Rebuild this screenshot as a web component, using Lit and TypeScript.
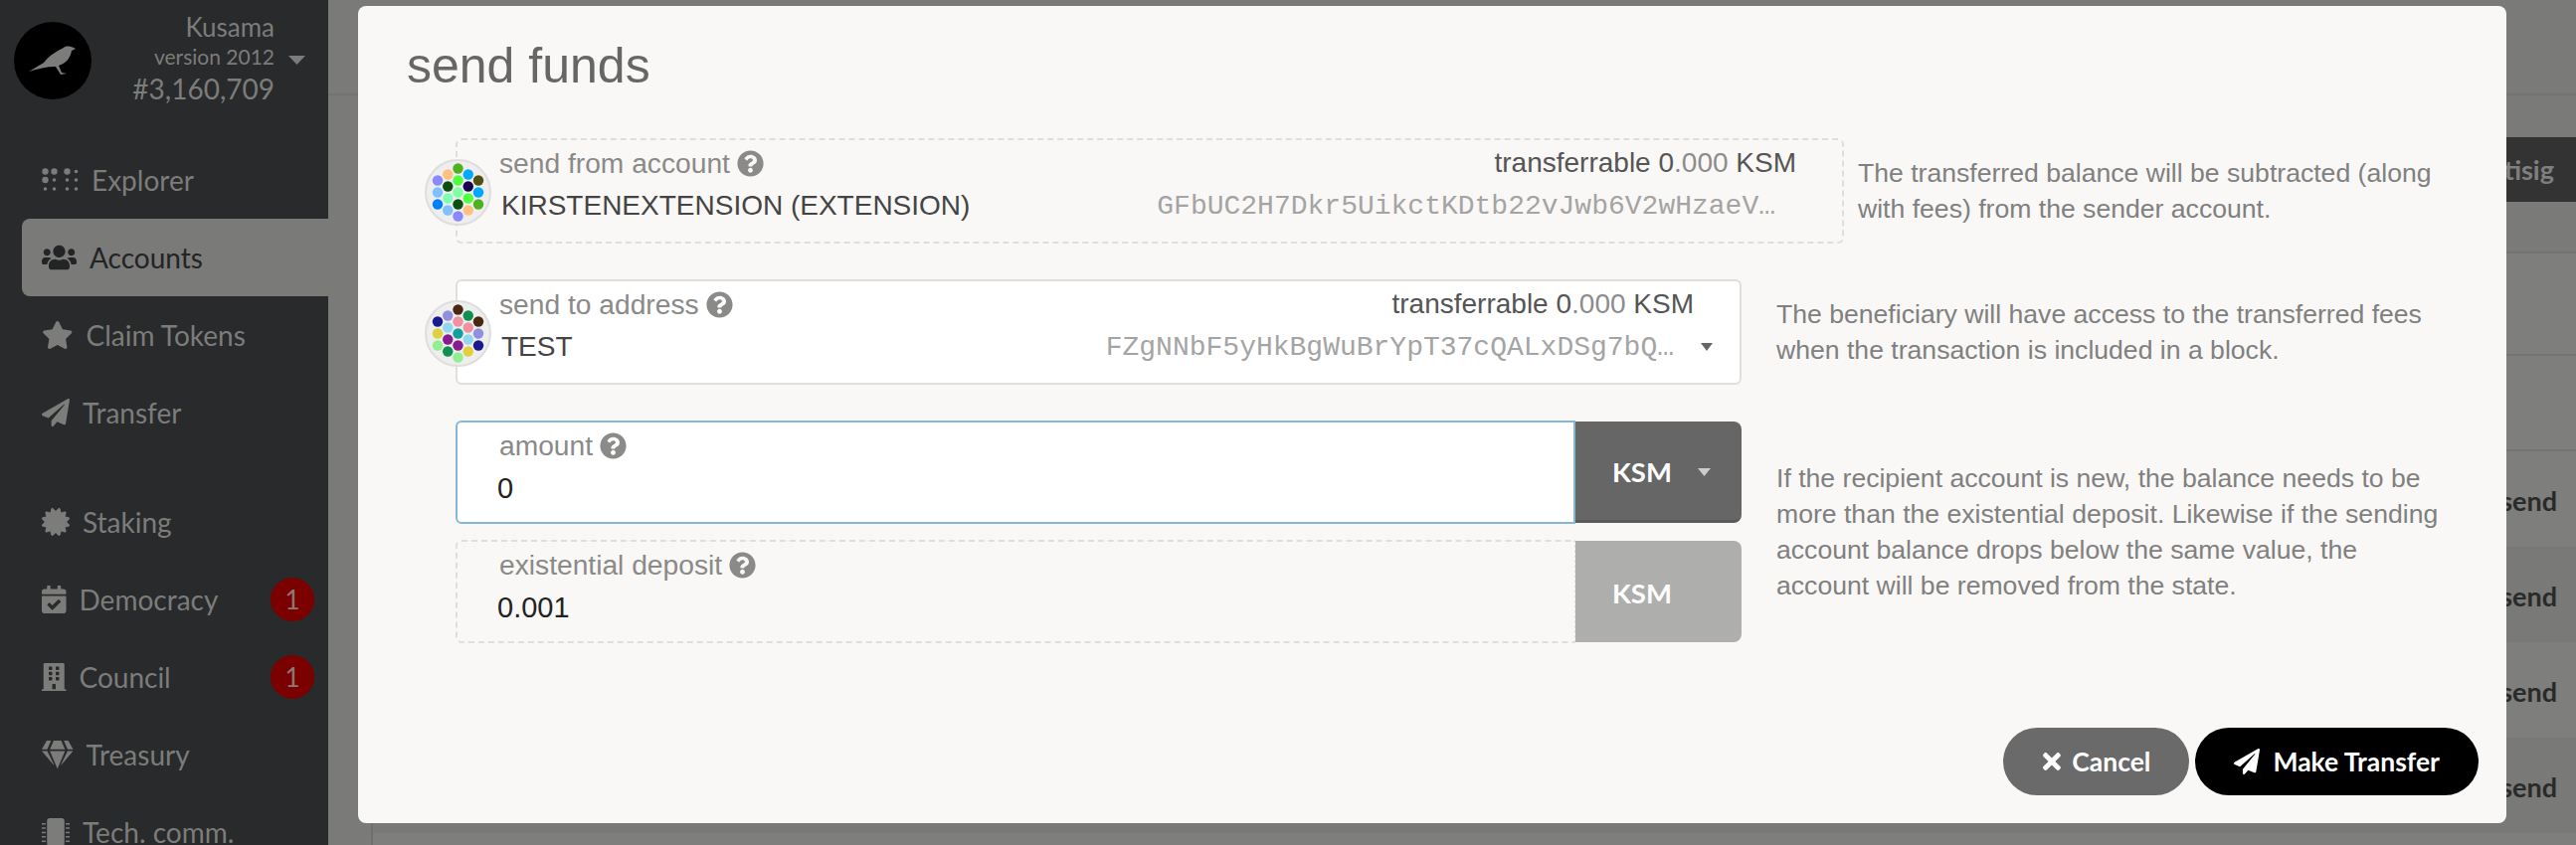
import { LitElement, html, css, svg } from "lit";
import { customElement } from "lit/decorators.js";

const P = {
  plane: [512, "M476 3.2L12.5 270.6c-18.1 10.4-15.8 35.6 2.2 43.2L121 358.4l287.3-253.2c5.5-4.9 13.3 2.6 8.6 8.3L176 407v80.5c0 23.6 28.5 32.9 42.5 15.8L282 426l124.6 52.2c14.2 6 30.4-2.9 33-18.2l72-432C515 7.8 493.3-6.8 476 3.2z"],
  star: [576, "M259.3 17.8L194 150.2 47.9 171.5c-26.2 3.8-36.7 36.1-17.7 54.6l105.7 103-25 145.5c-4.5 26.3 23.2 46 46.4 33.7L288 439.6l130.7 68.7c23.2 12.2 50.9-7.4 46.4-33.7l-25-145.5 105.7-103c19-18.5 8.5-50.8-17.7-54.6L382 150.2 316.7 17.8c-11.7-23.6-45.6-23.9-57.4 0z"],
  users: [640, "M96 224c35.3 0 64-28.7 64-64s-28.7-64-64-64-64 28.7-64 64 28.7 64 64 64zm448 0c35.3 0 64-28.7 64-64s-28.7-64-64-64-64 28.7-64 64 28.7 64 64 64zm32 32h-64c-17.6 0-33.5 7.1-45.1 18.6 40.3 22.1 68.9 62 75.1 109.4h66c17.7 0 32-14.3 32-32v-32c0-35.3-28.7-64-64-64zm-256 0c61.9 0 112-50.1 112-112S381.9 32 320 32 208 82.1 208 144s50.1 112 112 112zm76.8 32h-8.3c-20.8 10-43.9 16-68.5 16s-47.6-6-68.5-16h-8.3C179.6 288 128 339.6 128 403.2V432c0 26.5 21.5 48 48 48h288c26.5 0 48-21.5 48-48v-28.8c0-63.6-51.6-115.2-115.2-115.2zm-223.7-13.4C161.5 263.1 145.6 256 128 256H64c-35.3 0-64 28.7-64 64v32c0 17.7 14.3 32 32 32h65.9c6.3-47.4 34.9-87.3 75.2-109.4z"],
  question: [512, "M504 256c0 136.997-111.043 248-248 248S8 392.997 8 256C8 119.083 119.043 8 256 8s248 111.083 248 248zM262.655 90c-54.497 0-89.255 22.957-116.549 63.758-3.536 5.286-2.353 12.415 2.715 16.258l34.699 26.31c5.205 3.947 12.621 3.008 16.665-2.122 17.864-22.658 30.113-35.797 57.303-35.797 20.429 0 45.698 13.148 45.698 32.958 0 14.976-12.363 22.667-32.534 33.976C247.128 238.528 216 254.941 216 296v4c0 6.627 5.373 12 12 12h56c6.627 0 12-5.373 12-12v-1.333c0-28.462 83.186-29.647 83.186-106.667 0-58.002-60.165-102-116.531-102zM256 338c-25.365 0-46 20.635-46 46 0 25.364 20.635 46 46 46s46-20.636 46-46c0-25.365-20.635-46-46-46z"],
  times: [352, "M242.72 256l100.07-100.07c12.28-12.28 12.28-32.19 0-44.48l-22.24-22.24c-12.28-12.28-32.19-12.28-44.48 0L176 189.28 75.93 89.21c-12.28-12.28-32.19-12.28-44.48 0L9.21 111.45c-12.28 12.28-12.28 32.19 0 44.48L109.28 256 9.21 356.07c-12.28 12.28-12.28 32.19 0 44.48l22.24 22.24c12.28 12.28 32.2 12.28 44.48 0L176 322.72l100.07 100.07c12.28 12.28 32.2 12.28 44.48 0l22.24-22.24c12.28-12.28 12.28-32.19 0-44.48L242.72 256z"],
  cert: [512, "M458.622 255.92l45.985-45.005c13.708-12.977 7.316-36.039-10.664-40.339l-62.65-15.99 17.661-62.015c4.991-17.838-11.829-34.663-29.661-29.671l-61.994 17.667-15.984-62.671C337.085.197 313.765-6.276 300.99 7.228L256 53.57 211.011 7.229c-12.63-13.351-36.047-7.234-40.325 10.668l-15.984 62.671-61.995-17.667C74.87 57.907 58.056 74.738 63.046 92.572l17.661 62.015-62.65 15.99C.069 174.878-6.31 197.944 7.392 210.915l45.985 45.005-45.985 45.004c-13.708 12.977-7.316 36.039 10.664 40.339l62.65 15.99-17.661 62.015c-4.991 17.838 11.829 34.663 29.661 29.671l61.994-17.667 15.984 62.671c4.439 18.575 27.696 24.018 40.325 10.668L256 458.61l44.989 46.001c12.5 13.488 35.987 7.486 40.325-10.668l15.984-62.671 61.994 17.667c17.836 4.994 34.651-11.837 29.661-29.671l-17.661-62.015 62.65-15.99c17.987-4.302 24.366-27.367 10.664-40.339l-45.984-45.004z"],
  calendar: [448, "M436 160H12c-6.627 0-12-5.373-12-12v-36c0-26.51 21.49-48 48-48h48V12c0-6.627 5.373-12 12-12h40c6.627 0 12 5.373 12 12v52h128V12c0-6.627 5.373-12 12-12h40c6.627 0 12 5.373 12 12v52h48c26.51 0 48 21.49 48 48v36c0 6.627-5.373 12-12 12zM12 192h424c6.627 0 12 5.373 12 12v260c0 26.51-21.49 48-48 48H48c-26.51 0-48-21.49-48-48V204c0-6.627 5.373-12 12-12zm333.296 95.947l-28.169-28.398c-4.667-4.705-12.265-4.736-16.97-.068L194.12 364.665l-45.98-46.352c-4.667-4.705-12.266-4.736-16.971-.068l-28.397 28.17c-4.705 4.667-4.736 12.265-.068 16.97l82.601 83.269c4.667 4.705 12.265 4.736 16.97.068l142.953-141.805c4.705-4.667 4.736-12.265.068-16.97z"],
  building: [448, "M436 480h-20V24c0-13.255-10.745-24-24-24H56C42.745 0 32 10.745 32 24v456H12c-6.627 0-12 5.373-12 12v20h448v-20c0-6.627-5.373-12-12-12zM128 76c0-6.627 5.373-12 12-12h40c6.627 0 12 5.373 12 12v40c0 6.627-5.373 12-12 12h-40c-6.627 0-12-5.373-12-12V76zm0 96c0-6.627 5.373-12 12-12h40c6.627 0 12 5.373 12 12v40c0 6.627-5.373 12-12 12h-40c-6.627 0-12-5.373-12-12v-40zm52 148h-40c-6.627 0-12-5.373-12-12v-40c0-6.627 5.373-12 12-12h40c6.627 0 12 5.373 12 12v40c0 6.627-5.373 12-12 12zm76 160h-64v-84c0-6.627 5.373-12 12-12h40c6.627 0 12 5.373 12 12v84zm64-172c0 6.627-5.373 12-12 12h-40c-6.627 0-12-5.373-12-12v-40c0-6.627 5.373-12 12-12h40c6.627 0 12 5.373 12 12v40zm0-96c0 6.627-5.373 12-12 12h-40c-6.627 0-12-5.373-12-12v-40c0-6.627 5.373-12 12-12h40c6.627 0 12 5.373 12 12v40zm0-96c0 6.627-5.373 12-12 12h-40c-6.627 0-12-5.373-12-12V76c0-6.627 5.373-12 12-12h40c6.627 0 12 5.373 12 12v40z"],
  gem: [576, "M485.5 0L576 160H474.9L405.7 0h79.8zm-128 0l69.2 160H149.3L218.5 0h139zm-267 0h79.8l-69.2 160H0L90.5 0zM0 192h100.7l123 251.7c1.5 3.1-2.7 5.9-5 3.3L0 192zm148.2 0h279.6l-137 318.2c-1 2.4-4.5 2.4-5.5 0L148.2 192zm204.1 251.7l123-251.7H576L357.3 446.9c-2.3 2.7-6.5-.1-5-3.2z"],
  chip: [512, "M416 48v416c0 26.51-21.49 48-48 48H144c-26.51 0-48-21.49-48-48V48c0-26.51 21.49-48 48-48h224c26.51 0 48 21.49 48 48zM0 90h72v28H0zm0 80h72v28H0zm0 80h72v28H0zm0 80h72v28H0zm0 80h72v28H0zM440 90h72v28h-72zm0 80h72v28h-72zm0 80h72v28h-72zm0 80h72v28h-72zm0 80h72v28h-72z"],
} as const;

const icon = (name: keyof typeof P, cls = "") => {
  const [w, d] = P[name];
  return html`<svg class="ico ${cls}" viewBox="0 0 ${w} 512" fill="currentColor"><path d="${d}"></path></svg>`;
};

const braille = html`<svg class="ico braille" viewBox="0 0 37 24" fill="currentColor">
  <circle cx="3.5" cy="3.5" r="3.2"></circle><circle cx="12.5" cy="3.5" r="3.2"></circle><circle cx="25.5" cy="3.5" r="3.2"></circle><circle cx="34.5" cy="3.5" r="1.8"></circle>
  <circle cx="3.5" cy="12" r="3.2"></circle><circle cx="12.5" cy="12" r="1.8"></circle><circle cx="25.5" cy="12" r="1.8"></circle><circle cx="34.5" cy="12" r="1.8"></circle>
  <circle cx="3.5" cy="21" r="1.8"></circle><circle cx="12.5" cy="21" r="1.8"></circle><circle cx="25.5" cy="21" r="1.8"></circle><circle cx="34.5" cy="21" r="1.8"></circle>
</svg>`;

const layout: [number, number][] = [
  [-20.5, -12], [-20.5, 0], [-20.5, 12],
  [-10.25, -18], [-10.25, -6], [-10.25, 6], [-10.25, 18],
  [0, -24], [0, -12], [0, 0], [0, 12], [0, 24],
  [10.25, -18], [10.25, -6], [10.25, 6], [10.25, 18],
  [20.5, -12], [20.5, 0], [20.5, 12],
];

const identicon = (colors: string[]) => html`<svg class="identicon" viewBox="-33.5 -33.5 67 67">
  <circle r="32.5" fill="#eeeeee" stroke="#dedede" stroke-width="2"></circle>
  ${layout.map(([x, y], i) => svg`<circle cx=${x} cy=${y} r="5.2" fill=${colors[i]}></circle>`)}
</svg>`;

const A = ["#8888ff", "#80c0ff", "#0080ff", "#ffc080", "#0a5010", "#80ffb0", "#80c0ff", "#50b020", "#50ff40", "#80ffa0", "#0a5010", "#8888ff", "#00a8ff", "#180050", "#50ff40", "#ffc080", "#505010", "#00a8ff", "#50b020"];
const B = ["#1a1a90", "#e0d040", "#90f090", "#9090e0", "#90d8f0", "#8a1a90", "#109050", "#4a2810", "#f090a0", "#10a0a0", "#8a1a90", "#90f090", "#109050", "#f090a0", "#90d8f0", "#e0d040", "#4a2810", "#9090e0", "#1a1a90"];

const NAV: { label: string; icon: any; active?: boolean; badge?: string; sep?: boolean }[] = [
  { label: "Explorer", icon: braille },
  { label: "Accounts", icon: icon("users"), active: true },
  { label: "Claim Tokens", icon: icon("star") },
  { label: "Transfer", icon: icon("plane") },
  { label: "Staking", icon: icon("cert"), sep: true },
  { label: "Democracy", icon: icon("calendar"), badge: "1" },
  { label: "Council", icon: icon("building"), badge: "1" },
  { label: "Treasury", icon: icon("gem") },
  { label: "Tech. comm.", icon: icon("chip") },
];

@customElement("app-root")
export class AppRoot extends LitElement {
  static styles = css`
    :host { display: block; position: relative; width: 2590px; height: 850px; overflow: hidden; background: #7a7a78; font-family: "Liberation Sans", Arial, sans-serif; }
    * { box-sizing: border-box; }
    .ico { display: block; height: 1em; flex: none; }
    .page { display: flex; height: 850px; }

    .side { width: 330px; height: 850px; flex: none; background: #282a2c; color: #7c7c7a; font-family: Lato, sans-serif; overflow: hidden; display: flex; flex-direction: column; align-items: flex-end; }
    .brand { width: 100%; height: 142px; flex: none; padding: 22px 0 0 14px; display: flex; align-items: flex-start; }
    .logo { width: 78px; height: 78px; flex: none; display: block; }
    .chain { width: 184px; text-align: right; display: flex; flex-direction: column; margin-top: -10px; }
    .chain-name { font-size: 26px; line-height: 30px; height: 30px; }
    .chain-ver { font-size: 21px; line-height: 30px; height: 30px; position: relative; }
    .chain-num { font-size: 28px; line-height: 34px; }
    .caret-side { position: absolute; left: 198px; top: 14px; width: 17px; height: 9px; }
    .nav { width: 308px; display: flex; flex-direction: column; flex: none; }
    .item { height: 78px; flex: none; display: flex; align-items: center; gap: 13px; padding-left: 20px; font-size: 28px; border-radius: 8px 0 0 8px; position: relative; }
    .item .ico { font-size: 28px; }
    .item .ico.braille { font-size: 24px; }
    .item.sep { margin-top: 32px; }
    .item.active { background: #7a7a78; color: #222426; }
    .badge { position: absolute; left: 250px; top: 17px; width: 44px; height: 44px; border-radius: 50%; background: #7b0000; display: flex; align-items: center; justify-content: center; font-size: 26px; color: #8a7a78; }

    .main { flex: 1; display: flex; flex-direction: column; overflow: hidden; }
    .m-head { height: 96px; flex: none; border-bottom: 2px solid #737371; }
    .m-body { flex: 1; margin-left: 43px; border-left: 2px solid #6f6f72; background: #7e7e7c; display: flex; flex-direction: column; font-family: Lato, sans-serif; }
    .m-tool { height: 159px; flex: none; display: flex; justify-content: flex-end; align-items: flex-start; padding-top: 42px; border-bottom: 2px solid #737371; background: #7a7a78; }
    .multi { height: 65px; background: #333333; color: #7f7f7f; border-radius: 32px 0 0 32px; font-weight: 700; font-size: 27px; display: flex; align-items: center; padding: 0 22px 0 40px; }
    .m-row0 { height: 103px; flex: none; border-bottom: 2px solid #737371; }
    .m-row1 { height: 96px; flex: none; border-bottom: 2px solid #737371; }
    .row { height: 96px; flex: none; display: flex; align-items: center; justify-content: flex-end; padding: 2px 19px 0 0; font-weight: 700; font-size: 27px; color: #2a2a2a; }
    .row.alt { background: #797977; }

    .modal { position: absolute; left: 360px; top: 6px; width: 2160px; height: 822px; background: #f9f8f6; border-radius: 8px; display: flex; flex-direction: column; padding: 0 28px 28px 98px; }
    .title { font-size: 50px; line-height: 66px; margin: 27px 0 40px -49px; color: #666666; font-weight: 400; white-space: nowrap; }
    .form { display: flex; flex-direction: column; gap: 36px; }
    .row-f { display: flex; align-items: center; }
    .field { position: relative; height: 106px; border-radius: 6px; border: 2px solid #dedede; padding: 6px 46px 0 42px; flex: none; background: #fff; }
    .field.dash { border-style: dashed; background: transparent; }
    .field.focus { border-color: #85b7d9; }
    .top { display: flex; justify-content: space-between; height: 34px; align-items: center; }
    .lab { display: flex; align-items: center; gap: 7px; font-size: 28.2px; color: #8a8a88; white-space: nowrap; }
    .lab .ico { font-size: 27px; }
    .bal { font-size: 28px; color: #555; white-space: nowrap; }
    .bal i { font-style: normal; color: #8c8c8c; }
    .val { height: 50px; display: flex; align-items: center; justify-content: space-between; padding-top: 2px; }
    .name { font-size: 28px; color: #444; margin-left: 2px; white-space: nowrap; }
    .addr { font-family: "Liberation Mono", monospace; font-size: 28px; color: #a4a4a4; white-space: nowrap; margin-right: 21px; }
    .addr-wrap { display: flex; align-items: center; gap: 27px; }
    .addr-wrap .addr { margin-right: 0; }
    .dd { width: 12px; height: 8px; margin-right: -19px; flex: none; }
    .num { font-size: 29px; color: #222; margin-left: -2px; }
    .identicon { position: absolute; left: -33px; top: 19px; width: 67px; height: 67px; }
    .help { font-size: 26.6px; line-height: 36px; color: #808080; }
    .h1 { margin-left: 14px; width: 600px; }
    .h2 { margin-left: 35px; width: 675px; }
    .group { display: flex; flex-direction: column; gap: 16px; width: 1293px; flex: none; }
    .inp { display: flex; align-items: center; }
    .inp .field { width: 1126px; height: 104px; border-radius: 6px 0 0 6px; border-right-width: 1px; }
    .inp .field.focus { background: #fff; border-right-width: 2px; }
    .unit { width: 167px; height: 102px; border-radius: 0 8px 8px 0; display: flex; align-items: center; font: 700 27.5px Lato, sans-serif; color: #fff; padding: 2px 0 0 37px; gap: 26px; flex: none; }
    .unit.on { background: #666666; border-bottom: 3px solid #5a5a5a; }
    .unit.off { background: #aeaeac; }
    .unit svg { width: 13px; height: 8px; }
    .actions { margin-top: auto; display: flex; justify-content: flex-end; gap: 6px; }
    .btn { height: 68px; border-radius: 34px; display: flex; align-items: center; padding: 0 39px 0 40px; gap: 11px; color: #fff; font: 700 26.5px Lato, sans-serif; white-space: nowrap; }
    .btn.c { background: #6a6a6a; }
    .btn.k { background: #000; gap: 13px; padding: 0 39px; }
    .btn .ico { font-size: 26px; }
  `;

  private labelBlock(text: string) {
    return html`<span class="lab">${text}${icon("question")}</span>`;
  }

  private bal() {
    return html`<span class="bal">transferrable 0<i>.000</i> KSM</span>`;
  }

  render() {
    const caret = html`<svg class="dd" viewBox="0 0 12 8"><path d="M0 0h12L6 8z" fill="#666"></path></svg>`;
    return html`
      <div class="page">
        <aside class="side">
          <div class="brand">
            <svg class="logo" viewBox="0 0 78 78">
              <circle cx="39" cy="39" r="39" fill="#000"></circle>
              <path d="M15 50 L30 41 C36 33 44 29 50 26 C54 23 58 25 62 27 L58 29 C57 36 52 42 45 44 L48 51 L53 52 L47 53 L42 45 C33 45 24 47 15 50Z" fill="#7c7c7a"></path>
            </svg>
            <div class="chain">
              <div class="chain-name">Kusama</div>
              <div class="chain-ver">version 2012
                <svg class="caret-side" viewBox="0 0 17 9"><path d="M0 0h17L8.5 9z" fill="#7c7c7a"></path></svg>
              </div>
              <div class="chain-num">#3,160,709</div>
            </div>
          </div>
          <nav class="nav">
            ${NAV.map((n) => html`<div class="item ${n.active ? "active" : ""} ${n.sep ? "sep" : ""}">
              ${n.icon}<span>${n.label}</span>
              ${n.badge ? html`<span class="badge">${n.badge}</span>` : ""}
            </div>`)}
          </nav>
        </aside>
        <main class="main">
          <div class="m-head"></div>
          <div class="m-body">
            <div class="m-tool"><div class="multi">Multisig</div></div>
            <div class="m-row0"></div>
            <div class="m-row1"></div>
            <div class="row">send</div>
            <div class="row alt">send</div>
            <div class="row">send</div>
            <div class="row alt">send</div>
          </div>
        </main>
      </div>

      <section class="modal">
        <h2 class="title">send funds</h2>
        <div class="form">
          <div class="row-f">
            <div class="field dash" style="width:1396px">
              ${identicon(A)}
              <div class="top">${this.labelBlock("send from account")}${this.bal()}</div>
              <div class="val"><span class="name">KIRSTENEXTENSION (EXTENSION)</span><span class="addr">GFbUC2H7Dkr5UikctKDtb22vJwb6V2wHzaeV…</span></div>
            </div>
            <div class="help h1">The transferred balance will be subtracted (along with fees) from the sender account.</div>
          </div>
          <div class="row-f">
            <div class="field" style="width:1293px">
              ${identicon(B)}
              <div class="top">${this.labelBlock("send to address")}${this.bal()}</div>
              <div class="val"><span class="name">TEST</span><span class="addr-wrap"><span class="addr">FZgNNbF5yHkBgWuBrYpT37cQALxDSg7bQ…</span>${caret}</span></div>
            </div>
            <div class="help h2">The beneficiary will have access to the transferred fees when the transaction is included in a block.</div>
          </div>
          <div class="row-f">
            <div class="group">
              <div class="inp">
                <div class="field focus">
                  <div class="top">${this.labelBlock("amount")}</div>
                  <div class="val"><span class="num">0</span></div>
                </div>
                <div class="unit on">KSM<svg viewBox="0 0 13 8"><path d="M0 0h13L6.5 8z" fill="#ccc"></path></svg></div>
              </div>
              <div class="inp">
                <div class="field dash">
                  <div class="top">${this.labelBlock("existential deposit")}</div>
                  <div class="val"><span class="num">0.001</span></div>
                </div>
                <div class="unit off">KSM</div>
              </div>
            </div>
            <div class="help h2">If the recipient account is new, the balance needs to be more than the existential deposit. Likewise if the sending account balance drops below the same value, the account will be removed from the state.</div>
          </div>
        </div>
        <div class="actions">
          <div class="btn c">${icon("times")}<span>Cancel</span></div>
          <div class="btn k">${icon("plane")}<span>Make Transfer</span></div>
        </div>
      </section>
    `;
  }
}
